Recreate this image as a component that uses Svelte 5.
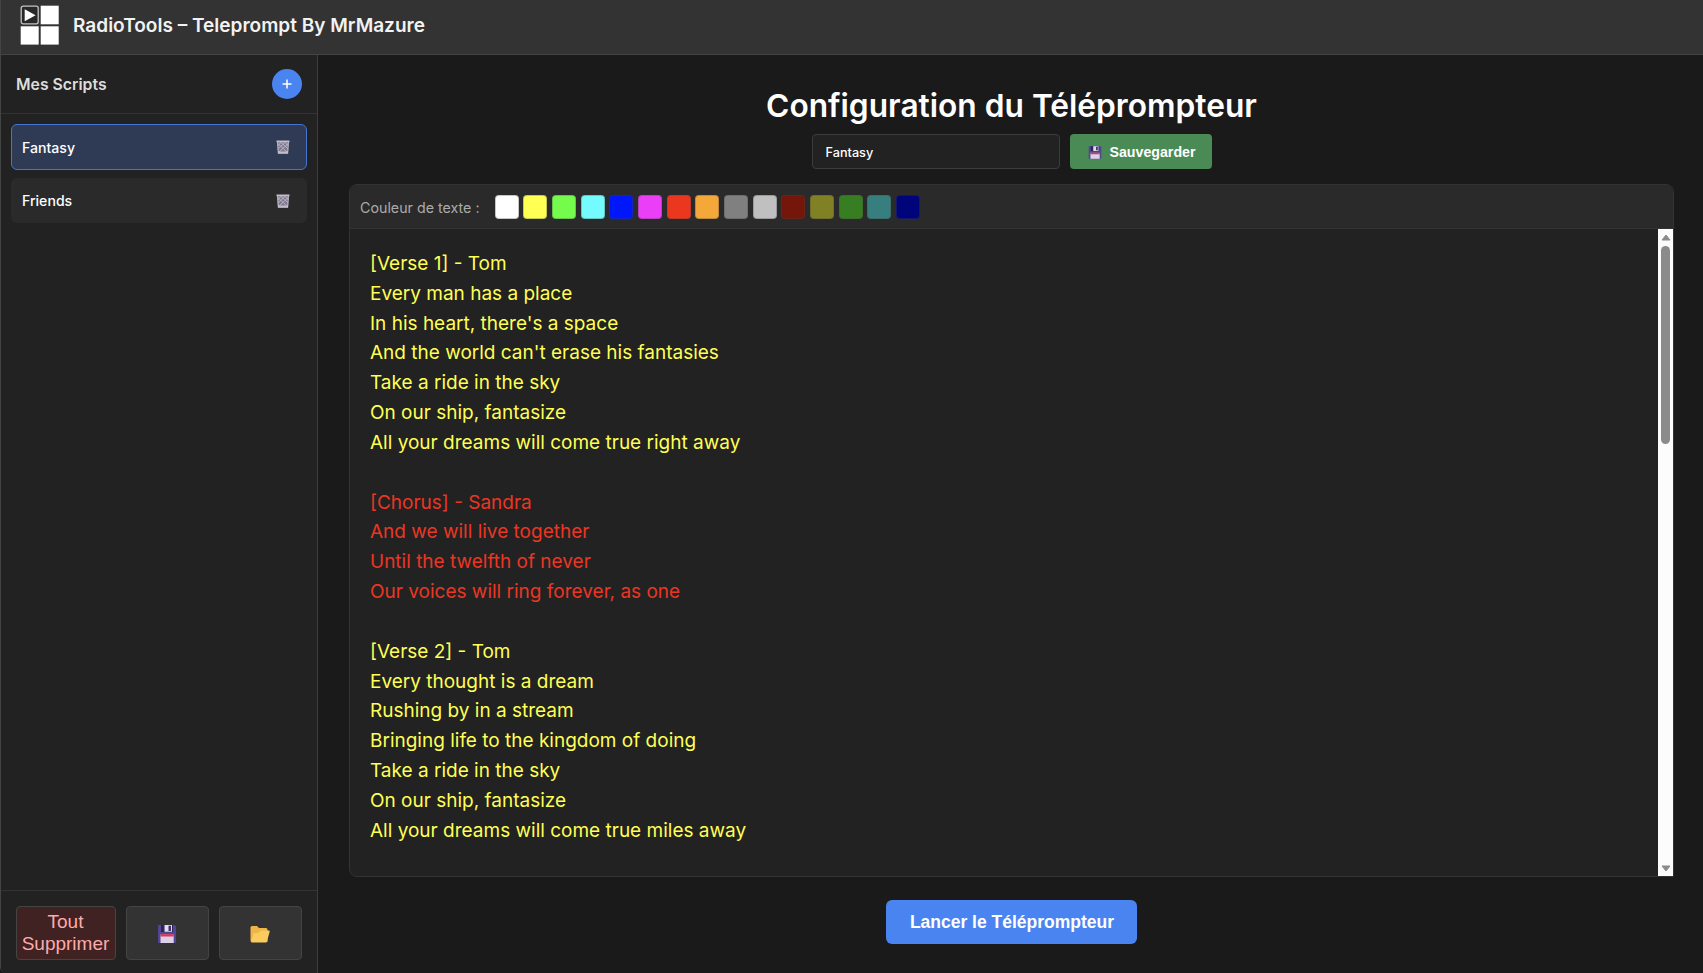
<script lang="ts">
	type Line = { text: string; color: string };

	const yellow = '#ffff54';
	const red = '#eb3623';

	let scripts = $state(['Fantasy', 'Friends']);
	let selected = $state(0);
	let name = $state('Fantasy');

	const colors = [
		'#ffffff',
		'#ffff54',
		'#75fb4c',
		'#73fbfd',
		'#0018f9',
		'#ea3ff7',
		'#ec371f',
		'#f4a83a',
		'#808080',
		'#c0c0c0',
		'#75160a',
		'#808024',
		'#377e22',
		'#377e7f',
		'#00047b'
	];

	function block(color: string, text: string): Line[] {
		return text.split('\n').map((line) => ({ text: line, color }));
	}

	const lines: Line[] = [
		...block(
			yellow,
			"[Verse 1] - Tom\nEvery man has a place\nIn his heart, there's a space\nAnd the world can't erase his fantasies\nTake a ride in the sky\nOn our ship, fantasize\nAll your dreams will come true right away\n"
		),
		...block(
			red,
			'[Chorus] - Sandra\nAnd we will live together\nUntil the twelfth of never\nOur voices will ring forever, as one\n'
		),
		...block(
			yellow,
			'[Verse 2] - Tom\nEvery thought is a dream\nRushing by in a stream\nBringing life to the kingdom of doing\nTake a ride in the sky\nOn our ship, fantasize\nAll your dreams will come true miles away'
		)
	];

	function select(index: number) {
		selected = index;
		name = scripts[index];
	}

	function addScript() {
		scripts.push('Nouveau');
		select(scripts.length - 1);
	}
</script>

{#snippet floppy(className: string)}
	<svg class={className} viewBox="0 0 20 20">
		<path d="M1.5 1h16.2L19 2.400V18a1 1 0 0 1-1 1H2a1 1 0 0 1-1-1V1.500z" fill="#4f4795" />
		<path d="M4 1h12v7H4z" fill="#2d2459" />
		<path d="M7.500 1H15v6.800H7.500z" fill="#e4dcec" />
		<path d="M11.500 1.700H14v5.200h-2.500z" fill="#3b3269" />
		<path d="M3.500 10.500h13.200V19H3.500z" fill="#ddd1e8" />
		<path d="M3.500 10.300h13.200v2.200H3.500z" fill="#e2364f" />
	</svg>
{/snippet}

<div class="app">
	<header class="topbar">
		<svg class="logo" viewBox="0 0 40 40">
			<rect x="1.200" y="1.200" width="17" height="17.600" rx="2" fill="#282828" stroke="#c4c4c4" stroke-width="1.300" />
			<path d="M4.700 4.300v12L15.600 10.300z" fill="#fff" />
			<rect x="20.700" y="0.700" width="18" height="18.600" fill="#fff" />
			<rect x="0.700" y="21.300" width="18" height="18.300" fill="#fff" />
			<rect x="20.700" y="21.300" width="18" height="18.300" fill="#fff" />
		</svg>
		<span class="brand">RadioTools – Teleprompt By MrMazure</span>
	</header>

	<div class="body">
		<aside class="sidebar">
			<div class="sidebar-header">
				<span class="sidebar-title">Mes Scripts</span>
				<button class="add" onclick={addScript} aria-label="Ajouter">
					<svg viewBox="0 0 10 10"><path d="M5 0.500v9M0.500 5h9" stroke="#fff" stroke-width="1.500" /></svg>
				</button>
			</div>

			<div class="scripts">
				{#each scripts as script, i}
					<button class="script" class:active={i === selected} onclick={() => select(i)}>
						<span>{script}</span>
						<svg class="trash" viewBox="0 0 14 14">
							<path d="M1 2h12l-0.900 11.500H1.900z" fill="#7d788c" />
							<path d="M1.600 2l0.800 11.500M12.400 2l-0.800 11.500" stroke="#bcb7c5" stroke-width="1" />
							<path d="M1.800 3.500l9.700 9M4.500 2l7.700 7M8.500 2l4 4M12.200 3.500l-9.700 9M9.500 2L1.800 9M5.500 2l-4 4M2.500 11l2.500 2.500M11.500 11L9 13.500" stroke="#bdb8c8" stroke-width="0.900" fill="none" />
							<path d="M0.500 0.500h13v1.700h-13zM2 11.600h10v2.100H2z" fill="#c2bdcb" />
						</svg>
					</button>
				{/each}
			</div>

			<div class="sidebar-footer">
				<button class="tool danger">Tout Supprimer</button>
				<button class="tool" aria-label="Exporter">{@render floppy('tool-icon')}</button>
				<button class="tool" aria-label="Importer">
					<svg class="tool-icon" viewBox="0 0 20 20">
						<path d="M0.500 3.500a1.500 1.500 0 0 1 1.500-1.500h5l2 2h7a1.500 1.500 0 0 1 1.500 1.500V18H2a1.500 1.500 0 0 1-1.500-1.500z" fill="#eeb548" />
						<path d="M1 18L3.500 9.500 9 8.500 11 6.500h8a0.800 0.800 0 0 1 0.700 1L17 17.500a1.300 1.300 0 0 1-1.200 1H2z" fill="#fccb5f" />
					</svg>
				</button>
			</div>
		</aside>

		<main class="main">
			<h1>Configuration du Téléprompteur</h1>
			<div class="save-row">
				<input class="name" bind:value={name} />
				<button class="save">{@render floppy('save-icon')}Sauvegarder</button>
			</div>

			<section class="editor">
				<div class="toolbar">
					<span class="toolbar-label">Couleur de texte :</span>
					<div class="swatches">
						{#each colors as color}
							<button class="swatch" style:background={color} aria-label={color}></button>
						{/each}
					</div>
				</div>
				<div class="content">
					<div class="text">
						{#each lines as line}
							<div class="line" style:color={line.color}>{line.text}</div>
						{/each}
					</div>
					<div class="scrollbar">
						<svg class="arrow" viewBox="0 0 10 7"><path d="M5 1L9 6H1z" /></svg>
						<div class="thumb"></div>
						<svg class="arrow down" viewBox="0 0 10 7"><path d="M5 6L1 1h8z" /></svg>
					</div>
				</div>
			</section>

			<button class="launch">Lancer le Téléprompteur</button>
		</main>
	</div>
</div>

<style>
	:global(body) {
		background: #1a1a1a;
	}

	.app {
		box-sizing: border-box;
		display: flex;
		flex-direction: column;
		width: 100vw;
		height: 100vh;
		overflow: hidden;
		border-left: 1px solid #444;
		border-bottom-left-radius: 6px;
		background: #1a1a1a;
		color: #fff;
		font-family: Inter, sans-serif;
	}

	.app * {
		box-sizing: border-box;
	}

	button {
		padding: 0;
		border: none;
		color: #fff;
		font-family: 'Liberation Sans', Arial, sans-serif;
		cursor: pointer;
	}

	svg {
		display: block;
		flex: none;
	}

	.topbar {
		display: flex;
		align-items: center;
		flex: none;
		gap: 13px;
		height: 55px;
		padding: 0 19px 4px;
		background: #333;
		border-bottom: 1px solid #444;
	}

	.logo {
		width: 40px;
		height: 40px;
	}

	.brand {
		padding-top: 1px;
		font-size: 19.05px;
		font-weight: 600;
		line-height: 24px;
		color: #f2f2f2;
	}

	.body {
		display: flex;
		flex: 1;
		min-height: 0;
	}

	.sidebar {
		display: flex;
		flex-direction: column;
		flex: none;
		width: 317px;
		background: #222;
		border-right: 1px solid #3c3c3c;
	}

	.sidebar-header {
		display: flex;
		align-items: center;
		justify-content: space-between;
		flex: none;
		height: 59px;
		padding: 0 15px;
		border-bottom: 1px solid #333;
	}

	.sidebar-title {
		padding-top: 1px;
		font-size: 15.8px;
		font-weight: 600;
		color: #ddd;
	}

	.add {
		display: flex;
		align-items: center;
		justify-content: center;
		width: 30px;
		height: 30px;
		border-radius: 50%;
		background: #4a84f0;
	}

	.add svg {
		width: 10px;
		height: 10px;
	}

	.scripts {
		display: flex;
		flex-direction: column;
		flex: 1;
		gap: 8px;
		padding: 10px 10px 0 10px;
	}

	.script {
		display: flex;
		align-items: center;
		justify-content: space-between;
		height: 45.5px;
		padding: 1px 16px 0 10px;
		border: 1px solid transparent;
		border-radius: 6px;
		background: #2a2a2a;
		font-family: Inter, sans-serif;
		font-size: 14.1px;
		font-weight: 500;
	}

	.script.active {
		background: #2f3a54;
		border-color: #4575d0;
	}

	.trash {
		width: 14px;
		height: 14px;
	}

	.sidebar-footer {
		display: flex;
		flex: none;
		gap: 10px;
		height: 83px;
		padding: 15px 15px 13px 15px;
		border-top: 1px solid #333;
	}

	.tool {
		display: flex;
		align-items: center;
		justify-content: center;
		flex: 1;
		padding: 1px 1px 0 0;
		border: 1px solid #444;
		border-radius: 4px;
		background: #333;
	}

	.tool.danger {
		flex: 0 0 100px;
		background: #402222;
		color: #ffaaaa;
		font-size: 19px;
		line-height: 21.5px;
		padding: 0 1px 1px 0;
	}

	.tool-icon {
		width: 20px;
		height: 20px;
	}

	.main {
		display: flex;
		flex-direction: column;
		align-items: center;
		flex: 1;
		min-width: 0;
		padding: 29px 29px 29px 31px;
	}

	h1 {
		margin: 0;
		font-size: 31.7px;
		font-weight: 600;
		line-height: 43px;
	}

	.save-row {
		display: flex;
		gap: 10px;
		margin-top: 7px;
	}

	.name {
		width: 248px;
		height: 35px;
		padding: 1px 12px 0 13px;
		border: 1px solid #3c3c3c;
		border-radius: 4px;
		background: #222;
		color: #fff;
		font-family: Inter, sans-serif;
		font-size: 12.7px;
		font-weight: 500;
		outline: none;
	}

	.save {
		display: flex;
		align-items: center;
		justify-content: center;
		gap: 8px;
		width: 142px;
		height: 35px;
		padding: 1px 0 0 2px;
		border-radius: 4px;
		background: #4a8a55;
		font-size: 14.2px;
		font-weight: 700;
	}

	.save-icon {
		width: 14px;
		height: 15px;
	}

	.editor {
		display: flex;
		flex-direction: column;
		align-self: stretch;
		flex: 1;
		min-height: 0;
		margin-top: 15px;
		overflow: hidden;
		border: 1px solid #333;
		border-radius: 8px 8px 0 8px;
		background: #222;
	}

	.toolbar {
		display: flex;
		align-items: center;
		flex: none;
		gap: 15px;
		height: 44px;
		padding: 0 10px;
		background: #2a2a2a;
		border-bottom: 1px solid #333;
	}

	.toolbar-label {
		padding-top: 1px;
		font-size: 14.25px;
		color: #aaa;
	}

	.swatches {
		display: flex;
		gap: 4.7px;
	}

	.swatch {
		width: 24px;
		height: 24px;
		border: 1px solid rgba(70, 70, 70, 0.3);
		border-radius: 4px;
	}

	.content {
		display: flex;
		flex: 1;
		min-height: 0;
	}

	.text {
		flex: 1;
		padding: 20px;
		overflow: hidden;
	}

	.line {
		height: 29.84px;
		font-size: 19px;
		line-height: 29.84px;
		white-space: pre;
	}

	.scrollbar {
		display: flex;
		flex-direction: column;
		align-items: center;
		width: 15px;
		padding: 5px 0 4px;
		background: #fcfcfc;
	}

	.arrow {
		width: 10px;
		height: 7px;
		fill: #8b8b8b;
		stroke: #8b8b8b;
		stroke-linejoin: round;
	}

	.arrow.down {
		margin-top: auto;
	}

	.thumb {
		width: 9px;
		height: 198px;
		margin-top: 5px;
		border-radius: 5px;
		background: #8b8b8b;
	}

	.launch {
		flex: none;
		width: 251px;
		height: 44px;
		margin-top: 23px;
		padding-left: 1px;
		border-radius: 6px;
		background: #4a84f0;
		font-size: 17.5px;
		font-weight: 700;
	}
</style>
